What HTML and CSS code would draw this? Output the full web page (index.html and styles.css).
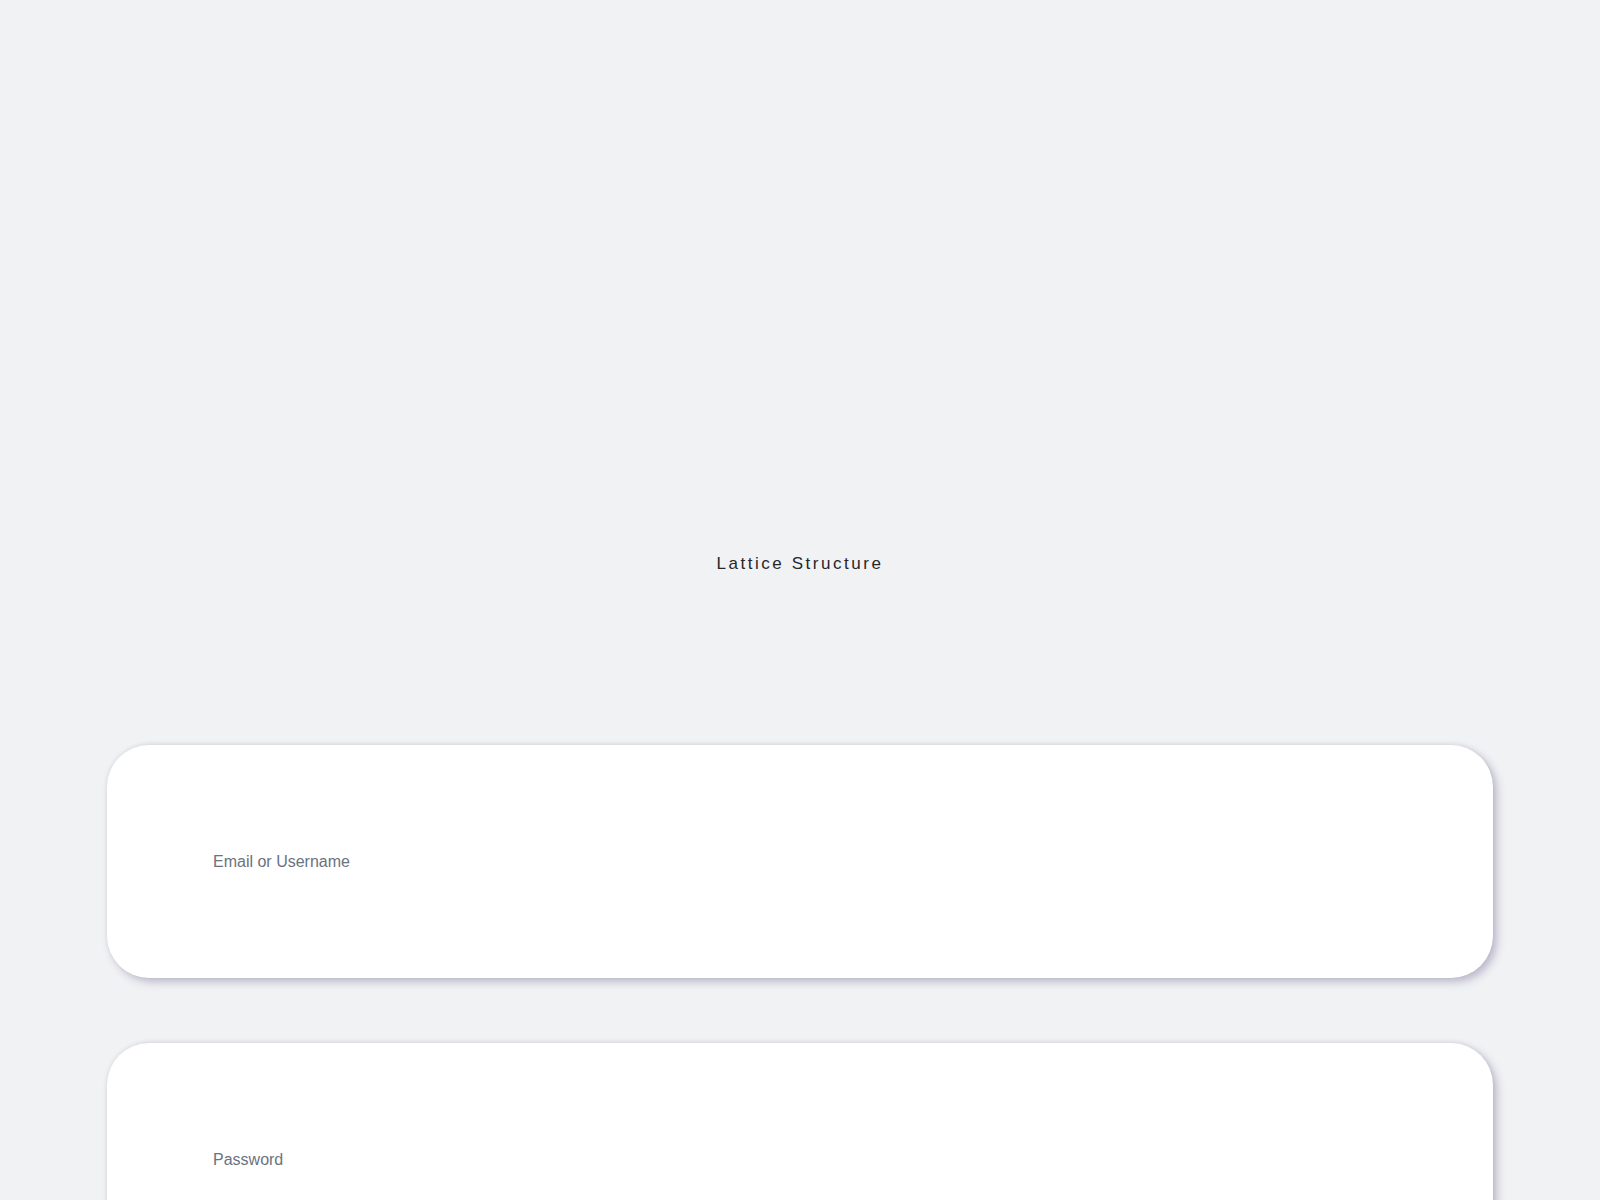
FILE: index.html
```html
<!DOCTYPE html>
<html lang="en">
<head>
<meta charset="utf-8">
<title>Lattice Structure</title>
<link rel="stylesheet" href="styles.css">
</head>
<body>
<main class="page">
  <header class="brand">
    <h1 class="brand-title">Lattice Structure</h1>
  </header>
  <form class="form">
    <label class="field">
      <span class="field-label">Email or Username</span>
    </label>
    <label class="field">
      <span class="field-label">Password</span>
    </label>
  </form>
</main>
</body>
</html>
```
FILE: styles.css
```css
html, body {
  margin: 0;
  padding: 0;
}
body {
  background: #f1f2f4;
  font-family: "Liberation Sans", Arial, sans-serif;
  height: 1200px;
  overflow: hidden;
}
.page {
  display: flex;
  flex-direction: column;
  padding: 0 107px;
}
.brand {
  padding-top: 552px;
  display: flex;
  justify-content: center;
}
.brand-title {
  margin: 0;
  font-size: 17px;
  font-weight: 400;
  line-height: 24px;
  letter-spacing: 0.15em;
  color: #25272c;
}
.form {
  display: flex;
  flex-direction: column;
  gap: 65px;
  margin-top: 169px;
}
.field {
  display: flex;
  align-items: center;
  height: 233px;
  padding-left: 106px;
  background: #ffffff;
  border-radius: 42px;
  box-shadow: 4px 4px 9px rgba(125, 115, 155, 0.45), 0 -1px 4px rgba(0, 0, 0, 0.07);
}
.field-label {
  font-size: 16px;
  color: #6b7280;
  line-height: 20px;
}
```
